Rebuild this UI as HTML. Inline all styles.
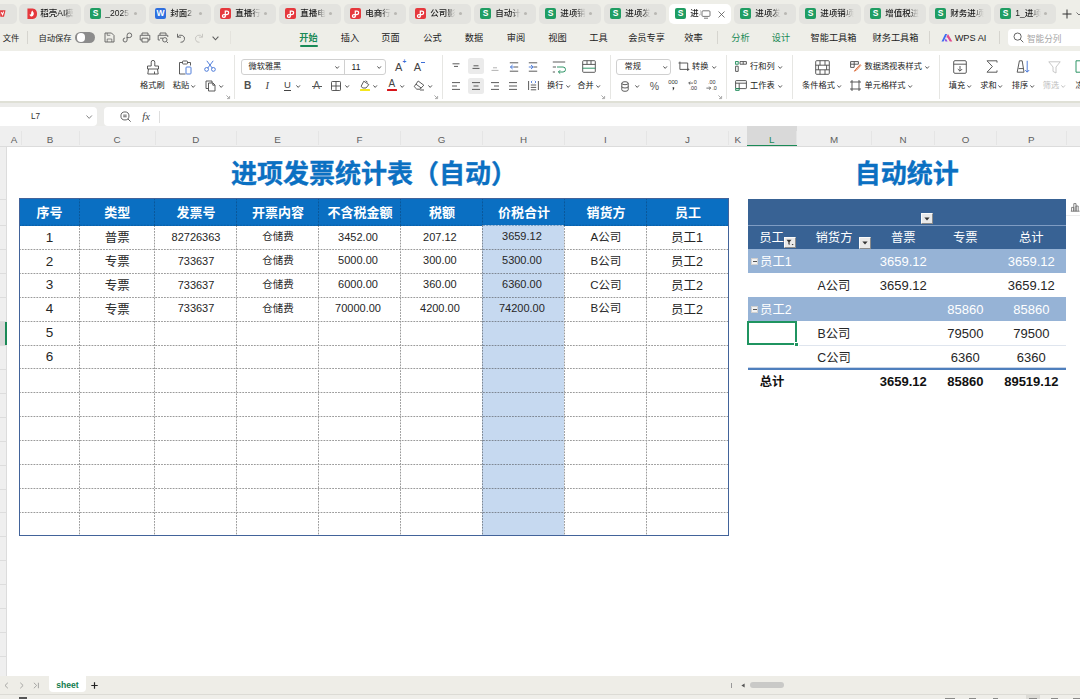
<!DOCTYPE html><html lang="zh"><head><meta charset="utf-8"><title>进项发票统计表</title><style>
*{box-sizing:border-box;margin:0;padding:0}
html,body{width:1080px;height:699px;overflow:hidden;background:#fff}
body{font-family:"Liberation Sans","Noto Sans CJK SC",sans-serif;color:#222;position:relative}
.a{position:absolute;white-space:nowrap}
.t{position:absolute;white-space:nowrap;line-height:1;transform:translate(-50%,-50%)}
.tl{position:absolute;white-space:nowrap;line-height:1;transform:translate(0,-50%)}
.tr{position:absolute;white-space:nowrap;line-height:1;transform:translate(-100%,-50%)}
svg{position:absolute;overflow:visible}
.tab{position:absolute;top:4px;height:19.9px;width:62px;border-radius:5px;margin-left:-1.1px;padding:0;background:#e3e3df;overflow:hidden}
.tab .ic{position:absolute;left:5px;top:4.1px;width:11px;height:11.2px;border-radius:2px;color:#fff;font-size:8.5px;font-weight:bold;line-height:11.2px;text-align:center}
.tab .tx{position:absolute;left:20.3px;top:4.5px;font-size:8.5px;line-height:11px;color:#1a1a1a;font-weight:500;white-space:nowrap;width:24px;overflow:hidden;
  -webkit-mask-image:linear-gradient(90deg,#000 62%,transparent 100%);mask-image:linear-gradient(90deg,#000 62%,transparent 100%)}
.tab .dot{position:absolute;left:48.5px;top:8.2px;width:3.5px;height:3.5px;border-radius:50%;background:#b9b8b3}
.mn{font-size:9.2px;color:#222}
.rb{font-size:8.2px;color:#222}
.ch{font-size:9.8px;color:#606060}
.sep{position:absolute;width:1px;background:#dcdcd8}
</style></head><body>
<div class="a" style="left:0;top:0;width:1080px;height:50.5px;background:#eeeee8"></div>
<div class="a" style="left:0;top:50.5px;width:1080px;height:51.5px;background:#fff"></div>
<div class="a" style="left:0;top:101px;width:1080px;height:2px;background:#dfe0d6"></div>
<div class="a" style="left:0;top:103px;width:1080px;height:23px;background:#ececea"></div>
<div class="a" style="left:0;top:107px;width:97px;height:18.5px;background:#fff;border-radius:0 4px 4px 0"></div>
<div class="a" style="left:104px;top:107px;width:976px;height:18.5px;background:#fff;border-radius:4px 0 0 4px"></div>
<div class="tab" style="left:-44px"></div>
<svg style="left:0;top:8px" width="12" height="12" viewBox="0 0 12 12"><path d="M0 2.2 L5.5 2.2 L4 8.8 L0.3 8.8 Z" fill="#e5383d"/><path d="M1.2 4.2 L2.6 6.6 L3.6 3.6" fill="none" stroke="#fff" stroke-width="1.1"/></svg>
<div class="tab" style="left:20px;"><div style="position:absolute;left:1.1px;top:-0.4px;width:60px;height:20px"><svg style="left:5.6px;top:3.9px" width="11.5" height="11.5" viewBox="0 0 12 12"><path d="M1.5 0.5 H7 Q11.5 1 11.5 6 Q11.5 11 7 11.5 H1.5 Z" fill="#e5383d"/><path d="M6.6 2.6 Q8.6 5 8 7 Q7.3 9.2 5.2 8.8 Q3.4 8.2 3.9 6.2 Q4.6 7 5.2 6.4 Q5.2 4 6.6 2.6Z" fill="#fff"/></svg><div class="tx" style="width:34px;-webkit-mask-image:linear-gradient(90deg,#000 72%,rgba(0,0,0,.3) 87%,transparent 100%);mask-image:linear-gradient(90deg,#000 72%,rgba(0,0,0,.3) 87%,transparent 100%)">稻壳AI模</div></div></div>
<div class="tab" style="left:85px;"><div style="position:absolute;left:1.1px;top:-0.4px;width:60px;height:20px"><div class="ic" style="background:#1f9d62">S</div><div class="tx" style="width:26px;-webkit-mask-image:linear-gradient(90deg,#000 66%,rgba(0,0,0,.3) 84%,transparent 100%);mask-image:linear-gradient(90deg,#000 66%,rgba(0,0,0,.3) 84%,transparent 100%)">_2025</div><div class="dot"></div></div></div>
<div class="tab" style="left:150px;"><div style="position:absolute;left:1.1px;top:-0.4px;width:60px;height:20px"><div class="ic" style="background:#2f6fde">W</div><div class="tx" style="width:26px;-webkit-mask-image:linear-gradient(90deg,#000 66%,rgba(0,0,0,.3) 84%,transparent 100%);mask-image:linear-gradient(90deg,#000 66%,rgba(0,0,0,.3) 84%,transparent 100%)">封面2</div><div class="dot"></div></div></div>
<div class="tab" style="left:215px;"><div style="position:absolute;left:1.1px;top:-0.4px;width:60px;height:20px"><div class="ic" style="background:#e5383d"></div><svg style="left:5px;top:4.1px" width="11" height="11.2" viewBox="0 0 11 11.2" fill="none" stroke="#fff" stroke-width="1.25"><path d="M5.3 8.2V3.1H6.9A1.75 1.75 0 0 1 6.9 6.6H3.7A1.45 1.45 0 1 0 5.3 8.2"/></svg><div class="tx" style="width:26px;-webkit-mask-image:linear-gradient(90deg,#000 66%,rgba(0,0,0,.3) 84%,transparent 100%);mask-image:linear-gradient(90deg,#000 66%,rgba(0,0,0,.3) 84%,transparent 100%)">直播行</div><div class="dot"></div></div></div>
<div class="tab" style="left:280px;"><div style="position:absolute;left:1.1px;top:-0.4px;width:60px;height:20px"><div class="ic" style="background:#e5383d"></div><svg style="left:5px;top:4.1px" width="11" height="11.2" viewBox="0 0 11 11.2" fill="none" stroke="#fff" stroke-width="1.25"><path d="M5.3 8.2V3.1H6.9A1.75 1.75 0 0 1 6.9 6.6H3.7A1.45 1.45 0 1 0 5.3 8.2"/></svg><div class="tx" style="width:26px;-webkit-mask-image:linear-gradient(90deg,#000 66%,rgba(0,0,0,.3) 84%,transparent 100%);mask-image:linear-gradient(90deg,#000 66%,rgba(0,0,0,.3) 84%,transparent 100%)">直播电</div><div class="dot"></div></div></div>
<div class="tab" style="left:345px;"><div style="position:absolute;left:1.1px;top:-0.4px;width:60px;height:20px"><div class="ic" style="background:#e5383d"></div><svg style="left:5px;top:4.1px" width="11" height="11.2" viewBox="0 0 11 11.2" fill="none" stroke="#fff" stroke-width="1.25"><path d="M5.3 8.2V3.1H6.9A1.75 1.75 0 0 1 6.9 6.6H3.7A1.45 1.45 0 1 0 5.3 8.2"/></svg><div class="tx" style="width:26px;-webkit-mask-image:linear-gradient(90deg,#000 66%,rgba(0,0,0,.3) 84%,transparent 100%);mask-image:linear-gradient(90deg,#000 66%,rgba(0,0,0,.3) 84%,transparent 100%)">电商行</div><div class="dot"></div></div></div>
<div class="tab" style="left:410px;"><div style="position:absolute;left:1.1px;top:-0.4px;width:60px;height:20px"><div class="ic" style="background:#e5383d"></div><svg style="left:5px;top:4.1px" width="11" height="11.2" viewBox="0 0 11 11.2" fill="none" stroke="#fff" stroke-width="1.25"><path d="M5.3 8.2V3.1H6.9A1.75 1.75 0 0 1 6.9 6.6H3.7A1.45 1.45 0 1 0 5.3 8.2"/></svg><div class="tx" style="width:26px;-webkit-mask-image:linear-gradient(90deg,#000 66%,rgba(0,0,0,.3) 84%,transparent 100%);mask-image:linear-gradient(90deg,#000 66%,rgba(0,0,0,.3) 84%,transparent 100%)">公司影</div><div class="dot"></div></div></div>
<div class="tab" style="left:475px;"><div style="position:absolute;left:1.1px;top:-0.4px;width:60px;height:20px"><div class="ic" style="background:#1f9d62">S</div><div class="tx" style="width:26px;-webkit-mask-image:linear-gradient(90deg,#000 66%,rgba(0,0,0,.3) 84%,transparent 100%);mask-image:linear-gradient(90deg,#000 66%,rgba(0,0,0,.3) 84%,transparent 100%)">自动计</div><div class="dot"></div></div></div>
<div class="tab" style="left:540px;"><div style="position:absolute;left:1.1px;top:-0.4px;width:60px;height:20px"><div class="ic" style="background:#1f9d62">S</div><div class="tx" style="width:26px;-webkit-mask-image:linear-gradient(90deg,#000 66%,rgba(0,0,0,.3) 84%,transparent 100%);mask-image:linear-gradient(90deg,#000 66%,rgba(0,0,0,.3) 84%,transparent 100%)">进项销</div><div class="dot"></div></div></div>
<div class="tab" style="left:605px;"><div style="position:absolute;left:1.1px;top:-0.4px;width:60px;height:20px"><div class="ic" style="background:#1f9d62">S</div><div class="tx" style="width:26px;-webkit-mask-image:linear-gradient(90deg,#000 66%,rgba(0,0,0,.3) 84%,transparent 100%);mask-image:linear-gradient(90deg,#000 66%,rgba(0,0,0,.3) 84%,transparent 100%)">进项发</div><div class="dot"></div></div></div>
<div class="tab" style="left:670px;background:#fff;"><div style="position:absolute;left:1.1px;top:-0.4px;width:60px;height:20px"><div class="ic" style="background:#1f9d62">S</div><div class="tx" style="width:12px;-webkit-mask-image:linear-gradient(90deg,#000 66%,rgba(0,0,0,.3) 84%,transparent 100%);mask-image:linear-gradient(90deg,#000 66%,rgba(0,0,0,.3) 84%,transparent 100%)">进项</div><svg style="left:31px;top:5.9px" width="10" height="9" viewBox="0 0 10 9"><rect x="1" y="0.8" width="8" height="5.6" rx="1" fill="none" stroke="#555" stroke-width="0.8"/><path d="M3 8.2H7" stroke="#555" stroke-width="0.8"/></svg><svg style="left:47.5px;top:6.9px" width="7" height="7" viewBox="0 0 7 7"><path d="M0.5 0.5 L6.5 6.5 M6.5 0.5 L0.5 6.5" stroke="#555" stroke-width="0.8"/></svg></div></div>
<div class="tab" style="left:735px;"><div style="position:absolute;left:1.1px;top:-0.4px;width:60px;height:20px"><div class="ic" style="background:#1f9d62">S</div><div class="tx" style="width:26px;-webkit-mask-image:linear-gradient(90deg,#000 66%,rgba(0,0,0,.3) 84%,transparent 100%);mask-image:linear-gradient(90deg,#000 66%,rgba(0,0,0,.3) 84%,transparent 100%)">进项发</div><div class="dot"></div></div></div>
<div class="tab" style="left:800px;"><div style="position:absolute;left:1.1px;top:-0.4px;width:60px;height:20px"><div class="ic" style="background:#1f9d62">S</div><div class="tx" style="width:34px;-webkit-mask-image:linear-gradient(90deg,#000 72%,rgba(0,0,0,.3) 87%,transparent 100%);mask-image:linear-gradient(90deg,#000 72%,rgba(0,0,0,.3) 87%,transparent 100%)">进项销项</div></div></div>
<div class="tab" style="left:865px;"><div style="position:absolute;left:1.1px;top:-0.4px;width:60px;height:20px"><div class="ic" style="background:#1f9d62">S</div><div class="tx" style="width:34px;-webkit-mask-image:linear-gradient(90deg,#000 72%,rgba(0,0,0,.3) 87%,transparent 100%);mask-image:linear-gradient(90deg,#000 72%,rgba(0,0,0,.3) 87%,transparent 100%)">增值税进</div></div></div>
<div class="tab" style="left:930px;"><div style="position:absolute;left:1.1px;top:-0.4px;width:60px;height:20px"><div class="ic" style="background:#1f9d62">S</div><div class="tx" style="width:34px;-webkit-mask-image:linear-gradient(90deg,#000 72%,rgba(0,0,0,.3) 87%,transparent 100%);mask-image:linear-gradient(90deg,#000 72%,rgba(0,0,0,.3) 87%,transparent 100%)">财务进项</div></div></div>
<div class="tab" style="left:995px;"><div style="position:absolute;left:1.1px;top:-0.4px;width:60px;height:20px"><div class="ic" style="background:#1f9d62">S</div><div class="tx" style="width:26px;-webkit-mask-image:linear-gradient(90deg,#000 66%,rgba(0,0,0,.3) 84%,transparent 100%);mask-image:linear-gradient(90deg,#000 66%,rgba(0,0,0,.3) 84%,transparent 100%)">1_进项</div><div class="dot"></div></div></div>
<svg style="left:1062px;top:8.8px" width="10" height="10" viewBox="0 0 10 10"><path d="M5 0.5V9.5M0.5 5H9.5" stroke="#333" stroke-width="1"/></svg>
<svg style="left:1076px;top:11.5px" width="6" height="4" viewBox="0 0 6 4"><path d="M0.5 0.5L3 3L5.5 0.5" fill="none" stroke="#555" stroke-width="0.8"/></svg>
<div class="t mn" style="left:11px;top:38.1px;font-size:8.3px">文件</div>
<div class="sep" style="left:27px;top:31px;height:13px;background:#d6d5cf"></div>
<div class="t mn" style="left:55px;top:38.1px;font-size:8.3px">自动保存</div>
<div class="a" style="left:75px;top:32px;width:19.5px;height:11px;border-radius:6px;background:#8c8c8c"></div>
<div class="a" style="left:76.5px;top:33.3px;width:8.4px;height:8.4px;border-radius:50%;background:#fff"></div>
<svg style="left:104px;top:32px" width="11" height="11" viewBox="0 0 11 11" fill="none" stroke="#5e5e5e" stroke-width="0.9"><path d="M1 1H7.5L10 3.5V10H1Z"/><path d="M3.2 10V7H7.8V10M3.2 1V3.3H6.3" stroke-width="0.7"/></svg>
<svg style="left:122px;top:32px" width="11" height="11" viewBox="0 0 11 11" fill="none" stroke="#5e5e5e" stroke-width="0.9"><path d="M4.6 5.6H7.4A2.3 2.3 0 1 0 5.1 3.3V8A2 2 0 1 1 3.1 6"/></svg>
<svg style="left:139px;top:32px" width="12" height="11" viewBox="0 0 12 11" fill="none" stroke="#5e5e5e" stroke-width="0.9"><path d="M3 3V1H9V3M3 8H1.2V3.3H10.8V8H9M3 6.2H9V10H3Z"/></svg>
<svg style="left:157px;top:32px" width="12" height="11" viewBox="0 0 12 11" fill="none" stroke="#5e5e5e" stroke-width="0.9"><path d="M3 3V1H9V3M3 8H1.2V3.3H10.8V5M3 6.2H6"/><circle cx="7.8" cy="7.8" r="2.2"/><path d="M9.5 9.5L11 11"/></svg>
<svg style="left:176px;top:33px" width="10" height="10" viewBox="0 0 10 10" fill="none" stroke="#5e5e5e" stroke-width="0.9"><path d="M1.5 0.8V4.2H5"/><path d="M1.8 4A3.6 3.6 0 1 1 4.5 9.3"/></svg>
<svg style="left:194px;top:33px" width="10" height="10" viewBox="0 0 10 10" fill="none" stroke="#c4c3be" stroke-width="0.9"><path d="M8.5 0.8V4.2H5"/><path d="M8.2 4A3.6 3.6 0 1 0 5.5 9.3"/></svg>
<svg style="left:212.3px;top:35.8px" width="7" height="4.6" viewBox="0 0 7 4.6" fill="none" stroke="#5e5e5e" stroke-width="1.1"><path d="M0.6 0.6L3.5 3.8L6.4 0.6"/></svg>
<div class="sep" style="left:229.5px;top:31px;height:13px;background:#e4e3dd"></div>
<div class="t mn" style="left:308.5px;top:38.9px;color:#1a8a57;font-weight:bold">开始</div>
<div class="a" style="left:299.5px;top:45.3px;width:18px;height:1.6px;background:#1a8a57;border-radius:1px"></div>
<div class="t mn" style="left:350px;top:38.9px">插入</div>
<div class="t mn" style="left:390.5px;top:38.9px">页面</div>
<div class="t mn" style="left:432.5px;top:38.9px">公式</div>
<div class="t mn" style="left:474px;top:38.9px">数据</div>
<div class="t mn" style="left:516px;top:38.9px">审阅</div>
<div class="t mn" style="left:557.5px;top:38.9px">视图</div>
<div class="t mn" style="left:598.5px;top:38.9px">工具</div>
<div class="t mn" style="left:646.5px;top:38.9px">会员专享</div>
<div class="t mn" style="left:693.5px;top:38.9px">效率</div>
<div class="sep" style="left:717px;top:31px;height:13px;background:#d6d5cf"></div>
<div class="t mn" style="left:740.5px;top:38.9px;color:#1a8a57">分析</div>
<div class="t mn" style="left:781px;top:38.9px;color:#1a8a57">设计</div>
<div class="t mn" style="left:833.5px;top:38.9px">智能工具箱</div>
<div class="t mn" style="left:895.5px;top:38.9px">财务工具箱</div>
<div class="sep" style="left:929px;top:31px;height:13px;background:#d6d5cf"></div>
<svg style="left:940.5px;top:32.5px" width="12" height="10" viewBox="0 0 12 10"><path d="M0.5 8.5L4.2 1H6.2L2.6 8.5Z" fill="#3d6cf0"/><path d="M5.3 4.2L7 1L11.3 8.5H8.8L6.6 4.8Z" fill="#e34a8e"/><path d="M4.8 5.4L6.6 8.5H4.6L3.8 7.2Z" fill="#8a4fe8"/></svg>
<div class="t mn" style="left:970.5px;top:38.9px;font-size:9.2px">WPS AI</div>
<div class="sep" style="left:999px;top:31px;height:13px;background:#d6d5cf"></div>
<div class="a" style="left:1007.5px;top:28.5px;width:90px;height:17px;border-radius:4px;background:#fff"></div>
<svg style="left:1013px;top:32px" width="11" height="11" viewBox="0 0 11 11" fill="none" stroke="#555" stroke-width="0.9"><circle cx="4.6" cy="4.6" r="3.6"/><path d="M7.3 7.3L10.3 10.3"/></svg>
<div class="tl mn" style="left:1027px;top:38.9px;color:#a5a5a5;font-size:8.6px">智能分列</div>
<svg style="left:145.5px;top:59.5px" width="14" height="15" viewBox="0 0 14 15" fill="none" stroke="#4a4a4a" stroke-width="0.9"><path d="M5.2 6V2.2A1.8 1.8 0 0 1 8.8 2.2V6H12.5V9H1.5V6Z"/><path d="M2.5 9L1.8 14H12.2L11.5 9"/><path d="M8.5 14V11.5"/></svg>
<div class="t rb" style="left:152.3px;top:85.8px;">格式刷</div>
<svg style="left:177.5px;top:59.5px" width="14" height="15" viewBox="0 0 14 15" fill="none" stroke="#4a4a4a" stroke-width="0.9"><path d="M4.5 2.5H1.5V14H7.5"/><path d="M9.5 2.5H12.5V5.5"/><rect x="4.5" y="1" width="5" height="3" rx="0.8"/><rect x="8" y="7" width="5" height="7" rx="0.8" stroke="#3d6fd6"/></svg>
<div class="t rb" style="left:181px;top:85.8px;">粘贴</div>
<svg style="left:191.10000000000002px;top:85.1px" width="4.4" height="3" viewBox="0 0 4.4 3" fill="none" stroke="#555" stroke-width="1"><path d="M0.4 0.4L2.2 2.4L4 0.4"/></svg>
<svg style="left:203.5px;top:60px" width="12" height="12" viewBox="0 0 12 12" fill="none" stroke="#3d6fd6" stroke-width="0.9"><circle cx="2.6" cy="9.4" r="1.9"/><circle cx="9.4" cy="9.4" r="1.9"/><path d="M3.8 8L9.2 0.8M8.2 8L2.8 0.8"/></svg>
<svg style="left:205px;top:80px" width="11" height="12" viewBox="0 0 11 12" fill="none" stroke="#4a4a4a" stroke-width="0.9"><path d="M7 3V1H1V8.5H3.5"/><path d="M3.5 3H8L10 5V11H3.5Z"/><path d="M7.8 3.2V5.2H9.8"/></svg>
<svg style="left:219.3px;top:85.1px" width="4.4" height="3" viewBox="0 0 4.4 3" fill="none" stroke="#555" stroke-width="1"><path d="M0.4 0.4L2.2 2.4L4 0.4"/></svg>
<svg style="left:225.5px;top:94.8px" width="4" height="4" viewBox="0 0 4 4" fill="none" stroke="#888" stroke-width="0.7"><path d="M0.4 0.4L3 3M3.6 1V3.6H1"/></svg>
<div class="sep" style="left:233.9px;top:55px;height:44px;background:#e6e6e3"></div>
<div class="a" style="left:240.5px;top:58.5px;width:145px;height:16px;border:1px solid #d0d0d0;border-radius:3px;background:#fff"></div>
<div class="a" style="left:344px;top:58.5px;width:1px;height:16px;background:#d0d0d0"></div>
<div class="tl rb" style="left:248.5px;top:66.5px;">微软雅黑</div>
<svg style="left:335.3px;top:65.6px" width="4.4" height="3" viewBox="0 0 4.4 3" fill="none" stroke="#555" stroke-width="1"><path d="M0.4 0.4L2.2 2.4L4 0.4"/></svg>
<div class="tl rb" style="left:351.5px;top:66.5px;font-size:8.6px;">11</div>
<svg style="left:376.6px;top:65.6px" width="4.4" height="3" viewBox="0 0 4.4 3" fill="none" stroke="#555" stroke-width="1"><path d="M0.4 0.4L2.2 2.4L4 0.4"/></svg>
<div class="t" style="left:247.8px;top:85.8px;font-size:10.2px;font-weight:bold;color:#505050">B</div>
<div class="t" style="left:267.3px;top:85.8px;font-size:10.5px;font-style:italic;font-family:'Liberation Serif',serif;color:#444">I</div>
<div class="t" style="left:287.5px;top:85.0px;font-size:9.5px;color:#444">U</div>
<div class="a" style="left:284px;top:90.3px;width:7px;height:0.9px;background:#444"></div>
<svg style="left:295.8px;top:85.1px" width="4.4" height="3" viewBox="0 0 4.4 3" fill="none" stroke="#555" stroke-width="1"><path d="M0.4 0.4L2.2 2.4L4 0.4"/></svg>
<div class="t" style="left:316.5px;top:85.8px;font-size:10px;color:#555">A</div>
<div class="a" style="left:311.5px;top:86px;width:10px;height:0.9px;background:#555"></div>
<svg style="left:331px;top:80.8px" width="10" height="10" viewBox="0 0 10 10" fill="none" stroke="#4a4a4a" stroke-width="0.9"><rect x="0.5" y="0.5" width="9" height="9" rx="0.8"/><path d="M5 0.5V9.5M0.5 5H9.5"/></svg>
<svg style="left:345.3px;top:85.1px" width="4.4" height="3" viewBox="0 0 4.4 3" fill="none" stroke="#555" stroke-width="1"><path d="M0.4 0.4L2.2 2.4L4 0.4"/></svg>
<svg style="left:359.5px;top:79.5px" width="11" height="9" viewBox="0 0 11 9" fill="none" stroke="#4a4a4a" stroke-width="0.9"><path d="M3.8 1.2L8.8 4.6L6 8H2.6L1.2 6.2Z"/><path d="M5.6 0.8L7.6 2.2"/></svg>
<div class="a" style="left:359.5px;top:88.8px;width:10.5px;height:2.4px;background:#f5e61e;border-radius:0.5px"></div>
<svg style="left:373.1px;top:85.1px" width="4.4" height="3" viewBox="0 0 4.4 3" fill="none" stroke="#555" stroke-width="1"><path d="M0.4 0.4L2.2 2.4L4 0.4"/></svg>
<div class="t" style="left:391.8px;top:84.3px;font-size:10px;color:#444">A</div>
<div class="a" style="left:386.5px;top:88.8px;width:10.5px;height:2.4px;background:#d7141a;border-radius:0.5px"></div>
<svg style="left:400.3px;top:85.1px" width="4.4" height="3" viewBox="0 0 4.4 3" fill="none" stroke="#555" stroke-width="1"><path d="M0.4 0.4L2.2 2.4L4 0.4"/></svg>
<svg style="left:413px;top:80.3px" width="12" height="11" viewBox="0 0 12 11" fill="none" stroke="#4a4a4a" stroke-width="0.9"><path d="M5.2 1L10.8 5.2L7 9.2H3.8L1.2 6.6Z"/><path d="M3 4.2L8.2 8"/><path d="M7 10H11"/></svg>
<svg style="left:427.8px;top:85.1px" width="4.4" height="3" viewBox="0 0 4.4 3" fill="none" stroke="#555" stroke-width="1"><path d="M0.4 0.4L2.2 2.4L4 0.4"/></svg>
<div class="t" style="left:398.7px;top:67.0px;font-size:11px;color:#444">A</div>
<div class="t" style="left:404.3px;top:62.3px;font-size:6.5px;color:#3d6fd6;font-weight:bold">+</div>
<div class="t" style="left:417.5px;top:67.0px;font-size:11px;color:#444">A</div>
<div class="a" style="left:421.2px;top:61.6px;width:3.6px;height:0.9px;background:#3d6fd6"></div>
<svg style="left:433.8px;top:94.8px" width="4" height="4" viewBox="0 0 4 4" fill="none" stroke="#888" stroke-width="0.7"><path d="M0.4 0.4L3 3M3.6 1V3.6H1"/></svg>
<div class="sep" style="left:441.9px;top:55px;height:44px;background:#e6e6e3"></div>
<div class="a" style="left:467.8px;top:58.3px;width:16px;height:16px;border-radius:2.5px;background:#ebebeb"></div>
<div class="a" style="left:467.8px;top:77.5px;width:16px;height:16px;border-radius:2.5px;background:#ebebeb"></div>
<svg style="left:451.3px;top:61.5px" width="10" height="10" viewBox="0 0 10 10" fill="none" stroke="#4a4a4a" stroke-width="0.9"><path d="M1.5 1.8H8.5M3 4.4H7"/></svg>
<svg style="left:470.7px;top:61.5px" width="10" height="10" viewBox="0 0 10 10" fill="none" stroke="#4a4a4a" stroke-width="0.9"><path d="M2.5 3.8H7.5M1.5 6.4H8.5"/></svg>
<svg style="left:489.7px;top:61.5px" width="10" height="10" viewBox="0 0 10 10" fill="none" stroke="#aaa" stroke-width="0.9"><path d="M3 5.8H7M1.5 8.4H8.5"/></svg>
<svg style="left:508.5px;top:61.5px" width="10" height="10" viewBox="0 0 10 10" fill="none" stroke="#4a4a4a" stroke-width="0.9"><path d="M0.8 0.8H9.2M0.8 9.2H9.2M5 5H9.2"/><path d="M3.6 3L1.4 5L3.6 7M1.4 5H5" stroke="#3d6fd6"/></svg>
<svg style="left:527.5px;top:61.5px" width="10" height="10" viewBox="0 0 10 10" fill="none" stroke="#4a4a4a" stroke-width="0.9"><path d="M0.8 0.8H9.2M0.8 9.2H9.2M5.6 5H9.2"/><path d="M3 3L5.2 5L3 7M5.2 5H0.8" stroke="#3d6fd6"/></svg>
<svg style="left:451.3px;top:80.8px" width="10" height="10" viewBox="0 0 10 10" fill="none" stroke="#4a4a4a" stroke-width="0.9"><path d="M1 1.6H9M1 5H6M1 8.4H9"/></svg>
<svg style="left:470.7px;top:80.8px" width="10" height="10" viewBox="0 0 10 10" fill="none" stroke="#4a4a4a" stroke-width="0.9"><path d="M1 1.6H9M2.5 5H7.5M1 8.4H9"/></svg>
<svg style="left:489.7px;top:80.8px" width="10" height="10" viewBox="0 0 10 10" fill="none" stroke="#4a4a4a" stroke-width="0.9"><path d="M1 1.6H9M4 5H9M1 8.4H9"/></svg>
<svg style="left:508.29999999999995px;top:80.8px" width="10" height="10" viewBox="0 0 10 10" fill="none" stroke="#4a4a4a" stroke-width="0.9"><path d="M1 1.6H9M1 5H9M1 8.4H9"/></svg>
<svg style="left:527.5px;top:80.3px" width="11" height="11" viewBox="0 0 11 11" fill="none" stroke="#4a4a4a" stroke-width="0.9"><path d="M0.6 1V10M10.4 1V10M2.8 5H8.2M2.8 7.4H8.2M2.8 9.8H8.2"/><path d="M4.2 0.8L3 2L4.2 3.2M6.8 0.8L8 2L6.8 3.2" stroke="#3d6fd6" stroke-width="0.8"/></svg>
<svg style="left:551.5px;top:60.5px" width="14" height="13" viewBox="0 0 14 13" fill="none" stroke="#4a4a4a" stroke-width="0.9"><path d="M0.8 1H13.2M0.8 6H4"/><path d="M0.8 11H3" /><path d="M5 6H11A2.4 2.4 0 0 1 11 11H6.5M8.2 9.2L6.4 11L8.2 12.6" stroke="#1a8a57"/></svg>
<div class="t rb" style="left:555.3px;top:85.8px;">换行</div>
<svg style="left:565.8px;top:85.1px" width="4.4" height="3" viewBox="0 0 4.4 3" fill="none" stroke="#555" stroke-width="1"><path d="M0.4 0.4L2.2 2.4L4 0.4"/></svg>
<svg style="left:581.5px;top:60px" width="14" height="13" viewBox="0 0 14 13" fill="none" stroke="#4a4a4a" stroke-width="0.9"><rect x="0.7" y="0.7" width="12.6" height="11.6" rx="0.8"/><path d="M0.7 4.4H13.3M5 0.7V4.4M9 0.7V4.4"/><path d="M0.7 8.2H13.3" stroke="#1a8a57"/></svg>
<div class="t rb" style="left:585.5px;top:85.8px;">合并</div>
<svg style="left:595.8px;top:85.1px" width="4.4" height="3" viewBox="0 0 4.4 3" fill="none" stroke="#555" stroke-width="1"><path d="M0.4 0.4L2.2 2.4L4 0.4"/></svg>
<svg style="left:601px;top:94.8px" width="4" height="4" viewBox="0 0 4 4" fill="none" stroke="#888" stroke-width="0.7"><path d="M0.4 0.4L3 3M3.6 1V3.6H1"/></svg>
<div class="sep" style="left:609.9px;top:55px;height:44px;background:#e6e6e3"></div>
<div class="a" style="left:616.3px;top:58.5px;width:54.5px;height:16px;border:1px solid #d0d0d0;border-radius:3px;background:#fff"></div>
<div class="tl rb" style="left:624.5px;top:66.5px;">常规</div>
<svg style="left:662.8px;top:65.6px" width="4.4" height="3" viewBox="0 0 4.4 3" fill="none" stroke="#555" stroke-width="1"><path d="M0.4 0.4L2.2 2.4L4 0.4"/></svg>
<svg style="left:677.8px;top:61px" width="11.5" height="10.5" viewBox="0 0 11.5 10.5" fill="none" stroke="#4a4a4a" stroke-width="0.9"><path d="M1.9 0.6V8.4H11"/><path d="M0.5 2H9.7V9.9"/><path d="M10 7.4L11 8.4L10 9.4" stroke-width="0.7"/></svg>
<div class="tl rb" style="left:692px;top:66.5px;">转换</div>
<svg style="left:711.5999999999999px;top:65.8px" width="4.4" height="3" viewBox="0 0 4.4 3" fill="none" stroke="#555" stroke-width="1"><path d="M0.4 0.4L2.2 2.4L4 0.4"/></svg>
<svg style="left:621px;top:80.5px" width="8" height="11" viewBox="0 0 8 11" fill="none" stroke="#4a4a4a" stroke-width="0.9"><ellipse cx="4" cy="2.2" rx="3.2" ry="1.5"/><path d="M0.8 2.2V8.8A3.2 1.5 0 0 0 7.2 8.8V2.2"/><path d="M0.8 5.5A3.2 1.5 0 0 0 7.2 5.5"/></svg>
<svg style="left:634.5999999999999px;top:85.1px" width="4.4" height="3" viewBox="0 0 4.4 3" fill="none" stroke="#555" stroke-width="1"><path d="M0.4 0.4L2.2 2.4L4 0.4"/></svg>
<div class="t" style="left:654.3px;top:85.8px;font-size:10.5px;color:#555">%</div>
<div class="t" style="left:673px;top:83.4px;font-size:5.8px;color:#333;letter-spacing:-0.1px">000</div>
<svg style="left:671.8px;top:87px" width="3" height="3.4" viewBox="0 0 3 3.4"><path d="M0.6 0.3H2.2V1.6L1.2 3.2H0.6L1.1 1.6H0.6Z" fill="#333"/></svg>
<svg style="left:688px;top:80.5px" width="5.4" height="4.2" viewBox="0 0 5.4 4.2" fill="none" stroke="#333" stroke-width="0.7"><path d="M5 2.1H0.8M2.2 0.6L0.7 2.1L2.2 3.6"/></svg>
<div class="tl" style="left:693.8px;top:82.8px;font-size:5.4px;color:#333">0</div>
<div class="t" style="left:693.3px;top:88.5px;font-size:5.4px;color:#333">.00</div>
<div class="t" style="left:711.8px;top:82.8px;font-size:5.4px;color:#333">.00</div>
<svg style="left:706.3px;top:86.4px" width="5.4" height="4.2" viewBox="0 0 5.4 4.2" fill="none" stroke="#333" stroke-width="0.7"><path d="M0.4 2.1H4.6M3.2 0.6L4.7 2.1L3.2 3.6"/></svg>
<div class="tl" style="left:712.2px;top:88.5px;font-size:5.4px;color:#333">.0</div>
<svg style="left:717.5px;top:94.8px" width="4" height="4" viewBox="0 0 4 4" fill="none" stroke="#888" stroke-width="0.7"><path d="M0.4 0.4L3 3M3.6 1V3.6H1"/></svg>
<div class="sep" style="left:726.1999999999999px;top:55px;height:44px;background:#e6e6e3"></div>
<svg style="left:735px;top:60.5px" width="12" height="11" viewBox="0 0 12 11" fill="none" stroke="#4a4a4a" stroke-width="0.9"><rect x="0.6" y="0.6" width="2.6" height="2.6" stroke="#1a8a57"/><path d="M5 0.6H11.4V3.2H5ZM8.2 0.6V3.2"/><path d="M0.6 5.2H3.2V10.4H0.6Z"/></svg>
<div class="tl rb" style="left:750px;top:66.5px;">行和列</div>
<svg style="left:777.8px;top:65.8px" width="4.4" height="3" viewBox="0 0 4.4 3" fill="none" stroke="#555" stroke-width="1"><path d="M0.4 0.4L2.2 2.4L4 0.4"/></svg>
<svg style="left:735px;top:80.3px" width="12" height="11" viewBox="0 0 12 11" fill="none" stroke="#4a4a4a" stroke-width="0.9"><rect x="0.6" y="0.6" width="10.8" height="8" rx="0.6"/><path d="M0.6 3.2H11.4M4.2 3.2V8.6"/><path d="M0.6 8.6H4.2V10.4H0.6Z" stroke="#1a8a57"/></svg>
<div class="tl rb" style="left:750px;top:85.8px;">工作表</div>
<svg style="left:777.8px;top:85.1px" width="4.4" height="3" viewBox="0 0 4.4 3" fill="none" stroke="#555" stroke-width="1"><path d="M0.4 0.4L2.2 2.4L4 0.4"/></svg>
<div class="sep" style="left:791.9px;top:55px;height:44px;background:#e6e6e3"></div>
<svg style="left:814.5px;top:59.5px" width="15" height="15" viewBox="0 0 15 15" fill="none" stroke="#4a4a4a" stroke-width="0.9"><rect x="0.7" y="0.7" width="13.6" height="13.6" rx="1"/><path d="M0.7 5.2H14.3M0.7 9.8H14.3M5 0.7V5.2M10 0.7V5.2M3.4 5.2V9.8M11.6 5.2V9.8M5 9.8V14.3M10 9.8V14.3"/></svg>
<div class="t rb" style="left:818.5px;top:85.8px;">条件格式</div>
<svg style="left:836.5999999999999px;top:85.1px" width="4.4" height="3" viewBox="0 0 4.4 3" fill="none" stroke="#555" stroke-width="1"><path d="M0.4 0.4L2.2 2.4L4 0.4"/></svg>
<svg style="left:849.5px;top:61px" width="11" height="11" viewBox="0 0 11 11" fill="none" stroke="#4a4a4a" stroke-width="0.9"><path d="M0.6 0.6H8.4V3.2M0.6 0.6V6.4H4M0.6 3.2H8.4M4.2 0.6V6.4"/><path d="M10.2 3.6L5.8 8.2L4.4 10.2L6.6 9L10.8 4.4Z" stroke="#d9622b"/></svg>
<div class="tl rb" style="left:864.5px;top:66.5px;">数据透视表样式</div>
<svg style="left:924.5999999999999px;top:65.8px" width="4.4" height="3" viewBox="0 0 4.4 3" fill="none" stroke="#555" stroke-width="1"><path d="M0.4 0.4L2.2 2.4L4 0.4"/></svg>
<svg style="left:850px;top:80.3px" width="11" height="11" viewBox="0 0 11 11" fill="none" stroke="#4a4a4a" stroke-width="0.9"><rect x="2" y="2" width="7" height="7"/><path d="M2 0V2H0M9 0V2H11M2 11V9H0M9 11V9H11"/></svg>
<div class="tl rb" style="left:864.5px;top:85.8px;">单元格样式</div>
<svg style="left:908.3px;top:85.1px" width="4.4" height="3" viewBox="0 0 4.4 3" fill="none" stroke="#555" stroke-width="1"><path d="M0.4 0.4L2.2 2.4L4 0.4"/></svg>
<div class="sep" style="left:938.9px;top:55px;height:44px;background:#e6e6e3"></div>
<svg style="left:953px;top:59.8px" width="14" height="14" viewBox="0 0 14 14" fill="none" stroke="#4a4a4a" stroke-width="0.9"><rect x="0.7" y="0.7" width="12.6" height="12.6" rx="1.2"/><path d="M0.7 4.2H13.3M7 6V11M4.8 9L7 11.2L9.2 9"/></svg>
<div class="t rb" style="left:957px;top:85.8px;">填充</div>
<svg style="left:967.0px;top:85.1px" width="4.4" height="3" viewBox="0 0 4.4 3" fill="none" stroke="#555" stroke-width="1"><path d="M0.4 0.4L2.2 2.4L4 0.4"/></svg>
<svg style="left:985.5px;top:60px" width="12" height="13" viewBox="0 0 12 13" fill="none" stroke="#4a4a4a" stroke-width="0.9"><path d="M11 2.6V0.8H1L6.4 6.5L1 12.2H11V10.4"/></svg>
<div class="t rb" style="left:988.5px;top:85.8px;">求和</div>
<svg style="left:998.4px;top:85.1px" width="4.4" height="3" viewBox="0 0 4.4 3" fill="none" stroke="#555" stroke-width="1"><path d="M0.4 0.4L2.2 2.4L4 0.4"/></svg>
<svg style="left:1015.5px;top:60px" width="14" height="13" viewBox="0 0 14 13" fill="none" stroke="#4a4a4a" stroke-width="0.9"><path d="M3.4 0.8H6.2L8 12.2H1.2Z"/><path d="M2.6 8.6H7.2"/><path d="M11.2 0.8V12M9.2 10L11.2 12.2L13.2 10" stroke="#3d6fd6"/></svg>
<div class="t rb" style="left:1020px;top:85.8px;">排序</div>
<svg style="left:1030.0px;top:85.1px" width="4.4" height="3" viewBox="0 0 4.4 3" fill="none" stroke="#555" stroke-width="1"><path d="M0.4 0.4L2.2 2.4L4 0.4"/></svg>
<svg style="left:1047.5px;top:60.5px" width="13" height="13" viewBox="0 0 13 13" fill="none" stroke="#4a4a4a" stroke-width="0.9"><path d="M0.8 0.8H12.2L8 6V12L5 10.4V6Z" stroke="#c2c2c2"/></svg>
<div class="t rb" style="left:1051px;top:85.8px;color:#bdbdbd;">筛选</div>
<svg style="left:1061.0px;top:85.1px" width="4.4" height="3" viewBox="0 0 4.4 3" fill="none" stroke="#c2c2c2" stroke-width="1"><path d="M0.4 0.4L2.2 2.4L4 0.4"/></svg>
<svg style="left:1075px;top:60px" width="10" height="13" viewBox="0 0 10 13" fill="none" stroke="#4a4a4a" stroke-width="0.9"><path d="M1 0.8H9V12.2H1Z" stroke="#1a8a57"/></svg>
<div class="tl rb" style="left:1075.5px;top:85.8px;">冻结</div>
<div class="t" style="left:35.5px;top:116.5px;font-size:8.2px;color:#333">L7</div>
<svg style="left:86px;top:114.8px" width="6.4" height="4.2" viewBox="0 0 6.4 4.2" fill="none" stroke="#777" stroke-width="0.9"><path d="M0.5 0.5L3.2 3.4L5.9 0.5"/></svg>
<svg style="left:119.5px;top:111px" width="11.5" height="11.5" viewBox="0 0 10 10" fill="none" stroke="#555" stroke-width="0.8"><circle cx="4.3" cy="4.3" r="3.5"/><path d="M2.8 3.6H5.8M2.8 5H5.8M6.9 6.9L9.3 9.3"/></svg>
<div class="t" style="left:146px;top:116.8px;font-size:10.5px;font-style:italic;font-family:'Liberation Serif',serif;color:#444">fx</div>
<div class="sep" style="left:158.5px;top:110.5px;height:12px;background:#dedede"></div>
<div class="a" style="left:0;top:126px;width:1080px;height:20.5px;background:#efefef;border-bottom:1px solid #dcdcdc"></div>
<div class="t ch" style="left:14.0px;top:140.1px;">A</div>
<div class="a" style="left:20.5px;top:131px;width:1px;height:14px;background:#e5e5e5"></div>
<div class="t ch" style="left:50.0px;top:140.1px;">B</div>
<div class="a" style="left:78.5px;top:131px;width:1px;height:14px;background:#e5e5e5"></div>
<div class="t ch" style="left:117.0px;top:140.1px;">C</div>
<div class="a" style="left:154.5px;top:131px;width:1px;height:14px;background:#e5e5e5"></div>
<div class="t ch" style="left:195.75px;top:140.1px;">D</div>
<div class="a" style="left:236.0px;top:131px;width:1px;height:14px;background:#e5e5e5"></div>
<div class="t ch" style="left:277.5px;top:140.1px;">E</div>
<div class="a" style="left:318.0px;top:131px;width:1px;height:14px;background:#e5e5e5"></div>
<div class="t ch" style="left:359.5px;top:140.1px;">F</div>
<div class="a" style="left:400.0px;top:131px;width:1px;height:14px;background:#e5e5e5"></div>
<div class="t ch" style="left:441.5px;top:140.1px;">G</div>
<div class="a" style="left:482.0px;top:131px;width:1px;height:14px;background:#e5e5e5"></div>
<div class="t ch" style="left:523.5px;top:140.1px;">H</div>
<div class="a" style="left:564.0px;top:131px;width:1px;height:14px;background:#e5e5e5"></div>
<div class="t ch" style="left:605.4px;top:140.1px;">I</div>
<div class="a" style="left:645.8px;top:131px;width:1px;height:14px;background:#e5e5e5"></div>
<div class="t ch" style="left:687.4px;top:140.1px;">J</div>
<div class="a" style="left:728.0px;top:131px;width:1px;height:14px;background:#e5e5e5"></div>
<div class="t ch" style="left:737.75px;top:140.1px;">K</div>
<div class="a" style="left:746.5px;top:131px;width:1px;height:14px;background:#e5e5e5"></div>
<div class="a" style="left:747px;top:126px;width:49.5px;height:20px;background:#d9d9d9;border-bottom:1.6px solid #1a8a57"></div>
<div class="t ch" style="left:771.75px;top:140.1px;color:#1a8a57;">L</div>
<div class="a" style="left:796.0px;top:131px;width:1px;height:14px;background:#e5e5e5"></div>
<div class="t ch" style="left:834.0px;top:140.1px;">M</div>
<div class="a" style="left:871.0px;top:131px;width:1px;height:14px;background:#e5e5e5"></div>
<div class="t ch" style="left:903.0px;top:140.1px;">N</div>
<div class="a" style="left:934.0px;top:131px;width:1px;height:14px;background:#e5e5e5"></div>
<div class="t ch" style="left:965.5px;top:140.1px;">O</div>
<div class="a" style="left:996.0px;top:131px;width:1px;height:14px;background:#e5e5e5"></div>
<div class="t ch" style="left:1031.25px;top:140.1px;">P</div>
<div class="a" style="left:1065.5px;top:131px;width:1px;height:14px;background:#e5e5e5"></div>
<div class="a" style="left:1149.5px;top:131px;width:1px;height:14px;background:#e5e5e5"></div>
<div class="a" style="left:0;top:146.5px;width:7px;height:529.7px;background:#efefef;border-right:1px solid #dcdcdc"></div>
<div class="a" style="left:0;top:198.5px;width:7px;height:1px;background:#dddddd"></div>
<div class="a" style="left:0;top:225px;width:7px;height:1px;background:#dddddd"></div>
<div class="a" style="left:0;top:249px;width:7px;height:1px;background:#dddddd"></div>
<div class="a" style="left:0;top:273px;width:7px;height:1px;background:#dddddd"></div>
<div class="a" style="left:0;top:297px;width:7px;height:1px;background:#dddddd"></div>
<div class="a" style="left:0;top:321px;width:7px;height:1px;background:#dddddd"></div>
<div class="a" style="left:0;top:345px;width:7px;height:1px;background:#dddddd"></div>
<div class="a" style="left:0;top:369px;width:7px;height:1px;background:#dddddd"></div>
<div class="a" style="left:0;top:393px;width:7px;height:1px;background:#dddddd"></div>
<div class="a" style="left:0;top:416.5px;width:7px;height:1px;background:#dddddd"></div>
<div class="a" style="left:0;top:440.5px;width:7px;height:1px;background:#dddddd"></div>
<div class="a" style="left:0;top:464.5px;width:7px;height:1px;background:#dddddd"></div>
<div class="a" style="left:0;top:488.5px;width:7px;height:1px;background:#dddddd"></div>
<div class="a" style="left:0;top:512px;width:7px;height:1px;background:#dddddd"></div>
<div class="a" style="left:0;top:536px;width:7px;height:1px;background:#dddddd"></div>
<div class="a" style="left:0;top:560px;width:7px;height:1px;background:#dddddd"></div>
<div class="a" style="left:0;top:584px;width:7px;height:1px;background:#dddddd"></div>
<div class="a" style="left:0;top:607.5px;width:7px;height:1px;background:#dddddd"></div>
<div class="a" style="left:0;top:631.5px;width:7px;height:1px;background:#dddddd"></div>
<div class="a" style="left:0;top:655.5px;width:7px;height:1px;background:#dddddd"></div>
<div class="a" style="left:0;top:321.5px;width:7px;height:23.5px;background:#d9d9d9;border-right:2px solid #1a8a57"></div>
<div class="t" style="left:374px;top:173.5px;font-size:26px;font-weight:bold;-webkit-text-stroke:0.35px #0b70c2;color:#0b70c2">进项发票统计表（自动）</div>
<div class="t" style="left:906.8px;top:173.5px;font-size:26px;font-weight:bold;-webkit-text-stroke:0.35px #0b70c2;color:#0b70c2">自动统计</div>
<div class="a" style="left:19px;top:198.2px;width:709.5px;height:27.8px;background:#0a6fc2"></div>
<div class="a" style="left:482.3px;top:225.2px;width:81.99999999999994px;height:310.31px;background:#c6d9f0"></div>
<svg style="left:0;top:0" width="1080" height="699" viewBox="0 0 1080 699" fill="none"><g stroke="#3a3a3a" stroke-width="1" stroke-dasharray="1.8 1.1" opacity="0.5"><path d="M19 249.5H728.5"/><path d="M19 273.5H728.5"/><path d="M19 297.5H728.5"/><path d="M19 321.5H728.5"/><path d="M19 345.5H728.5"/><path d="M19 368.5H728.5"/><path d="M19 392.5H728.5"/><path d="M19 416.5H728.5"/><path d="M19 440.5H728.5"/><path d="M19 464.5H728.5"/><path d="M19 488.5H728.5"/><path d="M19 512.5H728.5"/><path d="M79.5 225.2V535.51"/><path d="M154.5 225.2V535.51"/><path d="M236.5 225.2V535.51"/><path d="M318.5 225.2V535.51"/><path d="M400.5 225.2V535.51"/><path d="M482.5 225.2V535.51"/><path d="M564.5 225.2V535.51"/><path d="M646.5 225.2V535.51"/></g><g stroke="#0a4f8c" stroke-width="1" stroke-dasharray="2 1.2" opacity="0.75"><path d="M79.5 198.2V225.2"/><path d="M154.5 198.2V225.2"/><path d="M236.5 198.2V225.2"/><path d="M318.5 198.2V225.2"/><path d="M400.5 198.2V225.2"/><path d="M482.5 198.2V225.2"/><path d="M564.5 198.2V225.2"/><path d="M646.5 198.2V225.2"/><path d="M19 225.3H728.5" opacity="0.7"/></g></svg>
<div class="a" style="left:19px;top:197.7px;width:709.9px;height:338.71px;border:1.7px solid #42639a"></div>
<div class="t" style="left:49.6px;top:212px;font-size:13px;font-weight:bold;color:#fff">序号</div>
<div class="t" style="left:117.35px;top:212px;font-size:13px;font-weight:bold;color:#fff">类型</div>
<div class="t" style="left:196.1px;top:212px;font-size:13px;font-weight:bold;color:#fff">发票号</div>
<div class="t" style="left:278.1px;top:212px;font-size:13px;font-weight:bold;color:#fff">开票内容</div>
<div class="t" style="left:360.0px;top:212px;font-size:13px;font-weight:bold;color:#fff">不含税金额</div>
<div class="t" style="left:441.90000000000003px;top:212px;font-size:13px;font-weight:bold;color:#fff">税额</div>
<div class="t" style="left:523.9px;top:212px;font-size:13px;font-weight:bold;color:#fff">价税合计</div>
<div class="t" style="left:605.9px;top:212px;font-size:13px;font-weight:bold;color:#fff">销货方</div>
<div class="t" style="left:688.0px;top:212px;font-size:13px;font-weight:bold;color:#fff">员工</div>
<div class="t" style="left:49.5px;top:237.6px;font-size:13.5px;color:#262626">1</div>
<div class="t" style="left:117.25px;top:238.4px;font-size:12.5px;color:#262626">普票</div>
<div class="t" style="left:196.0px;top:236.7px;font-size:11px;color:#262626">82726363</div>
<div class="t" style="left:278.0px;top:236.4px;font-size:10.5px;color:#262626">仓储费</div>
<div class="t" style="left:358.0px;top:236.5px;font-size:11px;color:#262626">3452.00</div>
<div class="t" style="left:439.90000000000003px;top:236.5px;font-size:11px;color:#262626">207.12</div>
<div class="t" style="left:521.9px;top:236.4px;font-size:11px;color:#262626">3659.12</div>
<div class="t" style="left:605.8px;top:237.7px;font-size:11.5px;color:#262626">A公司</div>
<div class="t" style="left:686.9px;top:237.9px;font-size:12.5px;color:#262626">员工1</div>
<div class="t" style="left:49.5px;top:261.5px;font-size:13.5px;color:#262626">2</div>
<div class="t" style="left:117.25px;top:262.3px;font-size:12.5px;color:#262626">专票</div>
<div class="t" style="left:196.0px;top:260.6px;font-size:11px;color:#262626">733637</div>
<div class="t" style="left:278.0px;top:260.3px;font-size:10.5px;color:#262626">仓储费</div>
<div class="t" style="left:358.0px;top:260.4px;font-size:11px;color:#262626">5000.00</div>
<div class="t" style="left:439.90000000000003px;top:260.4px;font-size:11px;color:#262626">300.00</div>
<div class="t" style="left:521.9px;top:260.3px;font-size:11px;color:#262626">5300.00</div>
<div class="t" style="left:605.8px;top:261.6px;font-size:11.5px;color:#262626">B公司</div>
<div class="t" style="left:686.9px;top:261.8px;font-size:12.5px;color:#262626">员工2</div>
<div class="t" style="left:49.5px;top:285.4px;font-size:13.5px;color:#262626">3</div>
<div class="t" style="left:117.25px;top:286.2px;font-size:12.5px;color:#262626">专票</div>
<div class="t" style="left:196.0px;top:284.5px;font-size:11px;color:#262626">733637</div>
<div class="t" style="left:278.0px;top:284.2px;font-size:10.5px;color:#262626">仓储费</div>
<div class="t" style="left:358.0px;top:284.3px;font-size:11px;color:#262626">6000.00</div>
<div class="t" style="left:439.90000000000003px;top:284.3px;font-size:11px;color:#262626">360.00</div>
<div class="t" style="left:521.9px;top:284.2px;font-size:11px;color:#262626">6360.00</div>
<div class="t" style="left:605.8px;top:285.5px;font-size:11.5px;color:#262626">C公司</div>
<div class="t" style="left:686.9px;top:285.7px;font-size:12.5px;color:#262626">员工2</div>
<div class="t" style="left:49.5px;top:309.2px;font-size:13.5px;color:#262626">4</div>
<div class="t" style="left:117.25px;top:310.0px;font-size:12.5px;color:#262626">专票</div>
<div class="t" style="left:196.0px;top:308.3px;font-size:11px;color:#262626">733637</div>
<div class="t" style="left:278.0px;top:308.0px;font-size:10.5px;color:#262626">仓储费</div>
<div class="t" style="left:358.0px;top:308.1px;font-size:11px;color:#262626">70000.00</div>
<div class="t" style="left:439.90000000000003px;top:308.1px;font-size:11px;color:#262626">4200.00</div>
<div class="t" style="left:521.9px;top:308.0px;font-size:11px;color:#262626">74200.00</div>
<div class="t" style="left:605.8px;top:309.3px;font-size:11.5px;color:#262626">B公司</div>
<div class="t" style="left:686.9px;top:309.5px;font-size:12.5px;color:#262626">员工2</div>
<div class="t" style="left:49.5px;top:333.1px;font-size:13.5px;color:#262626">5</div>
<div class="t" style="left:49.5px;top:357.0px;font-size:13.5px;color:#262626">6</div>
<div class="a" style="left:747.8px;top:199.4px;width:317.79999999999995px;height:49.6px;background:#386294"></div>
<div class="a" style="left:747.8px;top:224.8px;width:317.79999999999995px;height:1px;background:#7f9cc3"></div>
<div class="a" style="left:747.8px;top:249px;width:317.79999999999995px;height:24px;background:#96b3d6"></div>
<div class="a" style="left:747.8px;top:297px;width:317.79999999999995px;height:24px;background:#96b3d6"></div>
<div class="a" style="left:796.5px;top:344.8px;width:269.0999999999999px;height:1px;background:#dfe5ee"></div>
<div class="a" style="left:747.8px;top:368px;width:317.79999999999995px;height:1.5px;background:#4f7fbd"></div>
<div class="a" style="left:747.8px;top:366.6px;width:317.79999999999995px;height:1px;background:#c9d5e7"></div>
<div class="a" style="left:921px;top:212.6px;width:12px;height:11.5px;background:#e9e9e9;border:0.8px solid #fbfbfb;border-right-color:#8a8a8a;border-bottom-color:#8a8a8a"></div>
<svg style="left:924px;top:216.6px" width="6" height="4" viewBox="0 0 6 4"><path d="M0.4 0.4H5.6L3 3.6Z" fill="#333"/></svg>
<div class="a" style="left:783.7px;top:236.8px;width:12px;height:11.5px;background:#e9e9e9;border:0.8px solid #fbfbfb;border-right-color:#8a8a8a;border-bottom-color:#8a8a8a"></div>
<svg style="left:785.9000000000001px;top:239.4px" width="8" height="7" viewBox="0 0 8 7"><path d="M0.5 0.8H5.5L3.6 3V6L2.4 5.2V3Z" fill="#333"/><path d="M5.6 5H7.6L6.6 6.2Z" fill="#333"/></svg>
<div class="a" style="left:859px;top:237px;width:12px;height:11.5px;background:#e9e9e9;border:0.8px solid #fbfbfb;border-right-color:#8a8a8a;border-bottom-color:#8a8a8a"></div>
<svg style="left:862px;top:241px" width="6" height="4" viewBox="0 0 6 4"><path d="M0.4 0.4H5.6L3 3.6Z" fill="#333"/></svg>
<div class="t" style="left:771.5px;top:238.2px;font-size:12.3px;color:#fff">员工</div>
<div class="t" style="left:834px;top:238.2px;font-size:12.3px;color:#fff">销货方</div>
<div class="t" style="left:903.3px;top:238.2px;font-size:12.3px;color:#fff">普票</div>
<div class="t" style="left:965.3px;top:238.2px;font-size:12.3px;color:#fff">专票</div>
<div class="t" style="left:1031.3px;top:238.2px;font-size:12.3px;color:#fff">总计</div>
<div class="a" style="left:751.4px;top:258.3px;width:6.8px;height:6.6px;background:#f2f2f2;border:0.6px solid #d0d0d0"></div>
<div class="a" style="left:753px;top:261.0px;width:3.6px;height:1.1px;background:#555"></div>
<div class="t" style="left:775.8px;top:262px;font-size:12.3px;color:#fff;">员工1</div>
<div class="t" style="left:903.3px;top:261.2px;font-size:13px;color:#fff;">3659.12</div>
<div class="t" style="left:1031.3px;top:261.2px;font-size:13px;color:#fff;">3659.12</div>
<div class="t" style="left:834px;top:286.1px;font-size:12.3px;color:#262626;">A公司</div>
<div class="t" style="left:903.3px;top:285.2px;font-size:13px;color:#262626;">3659.12</div>
<div class="t" style="left:1031.3px;top:285.2px;font-size:13px;color:#262626;">3659.12</div>
<div class="a" style="left:751.4px;top:306.3px;width:6.8px;height:6.6px;background:#f2f2f2;border:0.6px solid #d0d0d0"></div>
<div class="a" style="left:753px;top:309.0px;width:3.6px;height:1.1px;background:#555"></div>
<div class="t" style="left:775.8px;top:310px;font-size:12.3px;color:#fff;">员工2</div>
<div class="t" style="left:965.3px;top:309.2px;font-size:13px;color:#fff;">85860</div>
<div class="t" style="left:1031.3px;top:309.2px;font-size:13px;color:#fff;">85860</div>
<div class="t" style="left:834px;top:334.1px;font-size:12.3px;color:#262626;">B公司</div>
<div class="t" style="left:965.3px;top:333.2px;font-size:13px;color:#262626;">79500</div>
<div class="t" style="left:1031.3px;top:333.2px;font-size:13px;color:#262626;">79500</div>
<div class="t" style="left:834px;top:358.1px;font-size:12.3px;color:#262626;">C公司</div>
<div class="t" style="left:965.3px;top:357.2px;font-size:13px;color:#262626;">6360</div>
<div class="t" style="left:1031.3px;top:357.2px;font-size:13px;color:#262626;">6360</div>
<div class="t" style="left:772px;top:381.8px;font-size:12.3px;color:#111;font-weight:bold;">总计</div>
<div class="t" style="left:903.3px;top:381.2px;font-size:13px;color:#111;font-weight:bold;">3659.12</div>
<div class="t" style="left:965.3px;top:381.2px;font-size:13px;color:#111;font-weight:bold;">85860</div>
<div class="t" style="left:1031.3px;top:381.2px;font-size:13px;color:#111;font-weight:bold;">89519.12</div>
<div class="a" style="left:746.5px;top:320.5px;width:50.5px;height:24.5px;border:2px solid #1f9460;background:#fff"></div>
<div class="a" style="left:794px;top:342px;width:5px;height:5px;background:#1f9460;border:0.8px solid #fff"></div>
<svg style="left:1069.5px;top:201.5px" width="10" height="10" viewBox="0 0 10 10" fill="none" stroke="#666" stroke-width="0.8"><path d="M0.8 9.2H9.6M1.6 9.2V5.4H3.8V9.2M3.8 9.2V1.6H6V9.2M6 9.2V4H8.2V9.2"/></svg>
<div class="a" style="left:1066px;top:215px;width:14px;height:1px;background:#ececec"></div>
<div class="a" style="left:0;top:676.2px;width:1080px;height:17.8px;background:#eeede7"></div>
<div class="a" style="left:0;top:694px;width:1080px;height:5px;background:#efeee9;border-top:1px solid #dcdbd5"></div>
<div class="a" style="left:48.5px;top:676.2px;width:37.5px;height:16.3px;background:#fff;border-radius:0 0 4px 4px"></div>
<div class="t" style="left:67.5px;top:684.8px;font-size:8.6px;font-weight:bold;color:#127d4e">sheet</div>
<svg style="left:4px;top:681.5px" width="6" height="7" viewBox="0 0 7 8" fill="none" stroke="#9a9a98" stroke-width="1"><path d="M4.5 0.8L1.2 4L4.5 7.2"/></svg>
<svg style="left:18.5px;top:681.5px" width="6" height="7" viewBox="0 0 7 8" fill="none" stroke="#9a9a98" stroke-width="1"><path d="M1.5 0.8L4.8 4L1.5 7.2"/></svg>
<svg style="left:32.5px;top:681.5px" width="6" height="7" viewBox="0 0 7 8" fill="none" stroke="#9a9a98" stroke-width="1"><path d="M1 0.8L4.3 4L1 7.2M6.3 0.8V7.2"/></svg>
<svg style="left:90.5px;top:682.3px" width="7" height="7" viewBox="0 0 7 7"><path d="M3.5 0.3V6.7M0.3 3.5H6.7" stroke="#222" stroke-width="1.2"/></svg>
<div class="a" style="left:730.5px;top:682.5px;width:1px;height:5.5px;background:#999"></div>
<svg style="left:740.5px;top:683px" width="4" height="5" viewBox="0 0 4 5"><path d="M3.6 0.4V4.6L0.4 2.5Z" fill="#555"/></svg>
<div class="a" style="left:750px;top:681.8px;width:33.5px;height:6.6px;border-radius:3.3px;background:#c9c9c7"></div>
<div class="a" style="left:18.5px;top:697.3px;width:8.5px;height:2px;background:#555"></div>
<div class="a" style="left:1026px;top:695px;width:14px;height:4px;background:#dddcd7"></div>
<div class="a" style="left:945px;top:697.6px;width:10px;height:1.4px;background:#8a8a88"></div>
<div class="a" style="left:969px;top:697.6px;width:7px;height:1.4px;background:#8a8a88"></div>
<div class="a" style="left:993px;top:697.6px;width:5px;height:1.4px;background:#8a8a88"></div>
<div class="a" style="left:1029px;top:697.6px;width:8px;height:1.4px;background:#8a8a88"></div>
<div class="a" style="left:1051px;top:697.6px;width:7px;height:1.4px;background:#8a8a88"></div>
<div class="a" style="left:1073px;top:697.6px;width:7px;height:1.4px;background:#8a8a88"></div>
</body></html>
